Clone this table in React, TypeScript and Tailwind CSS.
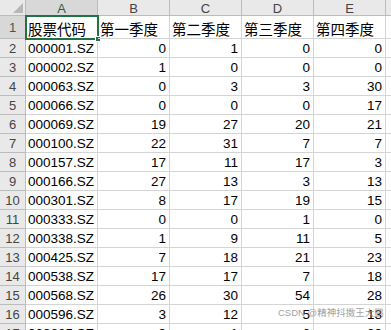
import React from "react";

const rows: (string | number)[][] = [
  ["000001.SZ", 0, 1, 0, 0],
  ["000002.SZ", 1, 0, 0, 0],
  ["000063.SZ", 0, 3, 3, 30],
  ["000066.SZ", 0, 0, 0, 17],
  ["000069.SZ", 19, 27, 20, 21],
  ["000100.SZ", 22, 31, 7, 7],
  ["000157.SZ", 17, 11, 17, 3],
  ["000166.SZ", 27, 13, 3, 13],
  ["000301.SZ", 8, 17, 19, 15],
  ["000333.SZ", 0, 0, 1, 0],
  ["000338.SZ", 1, 9, 11, 5],
  ["000425.SZ", 7, 18, 21, 23],
  ["000538.SZ", 17, 17, 7, 18],
  ["000568.SZ", 26, 30, 54, 28],
  ["000596.SZ", 3, 12, 5, 13],
  ["000625.SZ", 9, 1, 6, 22],
];

const headers = ["股票代码", "第一季度", "第二季度", "第三季度", "第四季度"];
const letters = ["A", "B", "C", "D", "E"];

const font = { fontFamily: '"Liberation Sans", Arial, "Noto Sans CJK SC", sans-serif' };

export default function App() {
  return (
    <div className="relative w-[391px] h-[330px] overflow-hidden bg-white text-black" style={font}>
      <div className="grid grid-cols-[26px_repeat(5,72px)_1fr] grid-rows-[16px_23px_repeat(16,19px)]">
        {/* header row */}
        <div className="relative border-r border-b border-[#bcbcbc] bg-[#e9e9e9]">
          <div className="absolute right-[2px] bottom-[2px] w-0 h-0 border-l-[10px] border-l-transparent border-b-[10px] border-b-[#b7b7b7]" />
        </div>
        {letters.map((l, i) => (
          <div
            key={l}
            className={`flex items-center justify-center pt-[1px] border-r border-b text-[13px] leading-none ${
              i === 0
                ? "bg-[#d8d8d8] text-[#2f5f45] border-[#bcbcbc] border-b-[#217346]"
                : "bg-[#e9e9e9] text-[#444] border-[#bcbcbc]"
            }`}
          >
            {l}
          </div>
        ))}
        <div className="border-b border-[#bcbcbc] bg-[#e9e9e9]" />

        {/* row 1 */}
        <div className="flex items-center justify-center pt-[2px] border-r border-b border-[#bcbcbc] bg-[#d8d8d8] text-[#2f5f45] text-[13px] border-r-[#217346]">
          1
        </div>
        {headers.map((h, i) => (
          <div
            key={h}
            className="relative flex items-end pb-[1px] pl-[2px] border-r border-b border-[#d4d4d4] text-[14.5px] leading-none"
          >
            {h}
            {i === 0 && (
              <>
                <div className="absolute -left-px -top-px right-[-2px] bottom-[-2px] border-2 border-[#217346] pointer-events-none" />
                <div className="absolute right-[-4px] bottom-[-4px] w-[6px] h-[6px] bg-[#217346] border border-white" />
              </>
            )}
          </div>
        ))}
        <div className="border-b border-[#d4d4d4]" />

        {rows.map((r, ri) => (
          <React.Fragment key={ri}>
            <div className="flex items-center justify-center border-r border-b border-[#bcbcbc] bg-[#e9e9e9] text-[#444] text-[13px] leading-none pt-[1px]">
              {ri + 2}
            </div>
            {r.map((c, ci) => (
              <div
                key={ci}
                className={`flex items-center border-r border-b border-[#d4d4d4] text-[13.5px] leading-none pt-[1px] ${
                  ci === 0 ? "justify-start pl-[2px]" : "justify-end pr-[3px]"
                }`}
              >
                {c}
              </div>
            ))}
            <div className="border-b border-[#d4d4d4]" />
          </React.Fragment>
        ))}
      </div>

      <div
        className="absolute left-[278px] top-[308px] text-[9.5px] leading-none text-[#8a8a8a] opacity-80 whitespace-nowrap"
        style={{ fontFamily: '"Liberation Sans", "Noto Sans CJK SC", sans-serif' }}
      >
        CSDN @精神抖擞王大鹏
      </div>
    </div>
  );
}
